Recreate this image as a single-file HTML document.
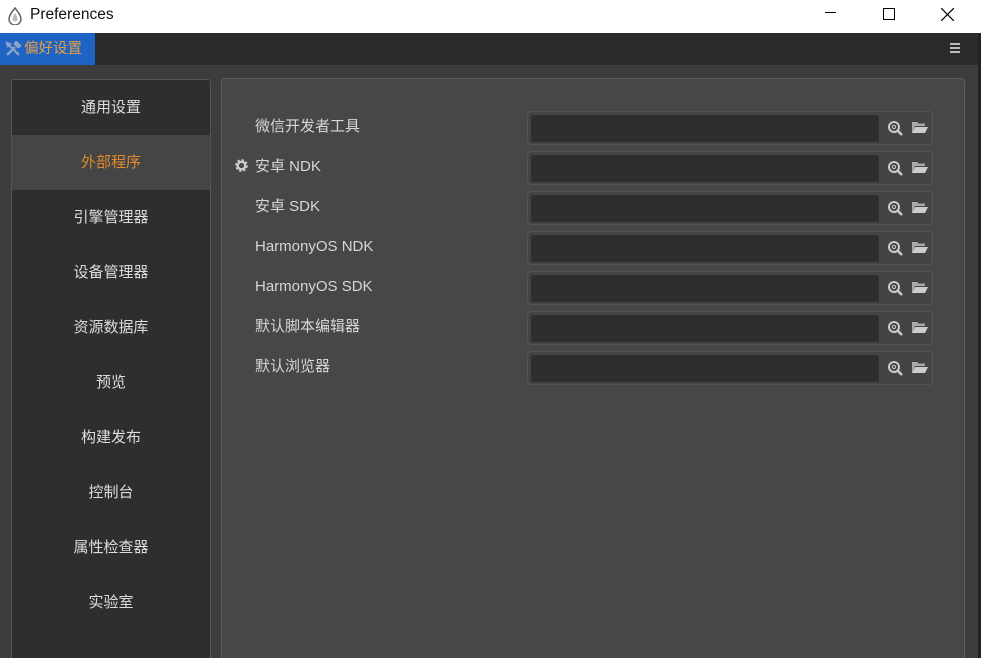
<!DOCTYPE html>
<html style="width:981px;height:658px;overflow:hidden"><head><meta charset="utf-8"><style>
*{margin:0;padding:0;box-sizing:border-box}
body{width:981px;height:658px;overflow:hidden;background:#3d3d3d;font-family:"Liberation Sans","Noto Sans CJK SC",sans-serif;position:relative}
.title{position:absolute;left:0;top:0;width:981px;height:33px;background:#fff;color:#111;font-size:15.5px}
.title .t{position:absolute;left:30px;top:0;line-height:30px}
.bar{position:absolute;left:0;top:33px;width:978px;height:32px;background:#2b2b2b}
.tab{position:absolute;left:0;top:0;width:95px;height:32px;background:#1f64c4;color:#e8a040;font-size:14.5px;line-height:32px;padding-left:24px}
.edge{position:absolute;left:978px;top:33px;width:3px;height:625px;background:#222}
.side{position:absolute;left:11px;top:79px;width:200px;height:600px;background:#2e2e2e;border:1px solid #555;border-radius:3px;overflow:hidden}
.side div{height:55px;line-height:55px;text-align:center;color:#ddd;font-size:15px}
.side .sel{background:#454545;color:#e08a2c}
.main{position:absolute;left:221px;top:78px;width:744px;height:600px;background:#474747;border:1px solid #5c5c5c;border-radius:4px}
.row{position:absolute;left:0;height:34px;width:744px}
.lbl{position:absolute;left:33px;top:2px;line-height:28px;height:28px;color:#d6d6d6;font-size:15px}
.box{position:absolute;left:305px;top:0;width:406px;height:34px;border:1px solid #555;border-radius:4px;background:#444}
.inp{position:absolute;left:3px;top:3px;width:348px;height:27px;background:#2e2e2e;border-radius:2px}
.ic{position:absolute;top:8px}
</style></head><body>
<div class="title">
<svg style="position:absolute;left:7px;top:7px" width="16" height="18" viewBox="0 0 16 18"><path d="M8 1 C4 6 2 9 2 12 a6 6 0 0 0 12 0 C14 9 12 6 8 1z" fill="none" stroke="#666" stroke-width="1.5"/><path d="M8 6 C6 9 5.5 10.5 5.5 12 a2.5 2.5 0 0 0 5 0 C10.5 10.5 10 9 8 6z" fill="#bbb"/></svg>
<span class="t">Preferences</span>
<div style="position:absolute;left:825px;top:12px;width:11px;height:1px;background:#000"></div>
<div style="position:absolute;left:883px;top:8px;width:12px;height:12px;border:1px solid #000"></div>
<svg style="position:absolute;left:941px;top:8px" width="13" height="13"><path d="M0 0L13 13M13 0L0 13" stroke="#000" stroke-width="1.2"/></svg>
</div>
<div class="bar"><div class="tab">
<svg style="position:absolute;left:5px;top:8px" width="16" height="16" viewBox="0 0 16 16"><path d="M2 14L10 6M11 1l4 4-2 1-3-3z" stroke="#8aa4c8" stroke-width="2.4" fill="none"/><path d="M14 14L4 4M2 2l3 1-2 2z" stroke="#8aa4c8" stroke-width="2.2" fill="none"/></svg>偏好设置</div>
<div style="position:absolute;left:950px;top:10px;width:10px;height:2px;background:#bbb;box-shadow:0 4px 0 #bbb,0 8px 0 #bbb"></div>
</div>
<div class="edge"></div>
<div class="side">
<div>通用设置</div><div class="sel">外部程序</div><div>引擎管理器</div><div>设备管理器</div><div>资源数据库</div><div>预览</div><div>构建发布</div><div>控制台</div><div>属性检查器</div><div>实验室</div>
</div>
<div class="main">
<svg style="position:absolute;left:12px;top:79px" width="15" height="15" viewBox="0 0 16 16"><circle cx="8" cy="8" r="5" fill="none" stroke="#ccc" stroke-width="3.5" stroke-dasharray="2.2 1.7"/><circle cx="8" cy="8" r="4" fill="none" stroke="#ccc" stroke-width="2.5"/></svg>
<div class="row" style="top:32px"><span class="lbl">微信开发者工具</span><div class="box"></div></div>
<div class="row" style="top:72px"><span class="lbl">安卓 NDK</span><div class="box"></div></div>
<div class="row" style="top:112px"><span class="lbl">安卓 SDK</span><div class="box"></div></div>
<div class="row" style="top:152px"><span class="lbl">HarmonyOS NDK</span><div class="box"></div></div>
<div class="row" style="top:192px"><span class="lbl">HarmonyOS SDK</span><div class="box"></div></div>
<div class="row" style="top:232px"><span class="lbl">默认脚本编辑器</span><div class="box"></div></div>
<div class="row" style="top:272px"><span class="lbl">默认浏览器</span><div class="box"></div></div>
</div>
<script>
document.querySelectorAll('.box').forEach(b=>{b.innerHTML='<div class="inp"></div><svg class="ic" style="left:359px" width="17" height="17" viewBox="0 0 17 17"><circle cx="7" cy="7" r="5" fill="none" stroke="#ccc" stroke-width="2"/><circle cx="7" cy="7" r="1.6" fill="none" stroke="#ccc" stroke-width="1"/><path d="M10.5 10.5L15 15" stroke="#ccc" stroke-width="2.4"/></svg><svg class="ic" style="left:383px;top:8px" width="18" height="15" viewBox="0 0 18 15"><path d="M1 2h5l1.5 1.5H14V6H4L1 13z" fill="#aaa"/><path d="M4 7h13l-3 6H1z" fill="#ccc"/></svg>';});
</script>
</body></html>
